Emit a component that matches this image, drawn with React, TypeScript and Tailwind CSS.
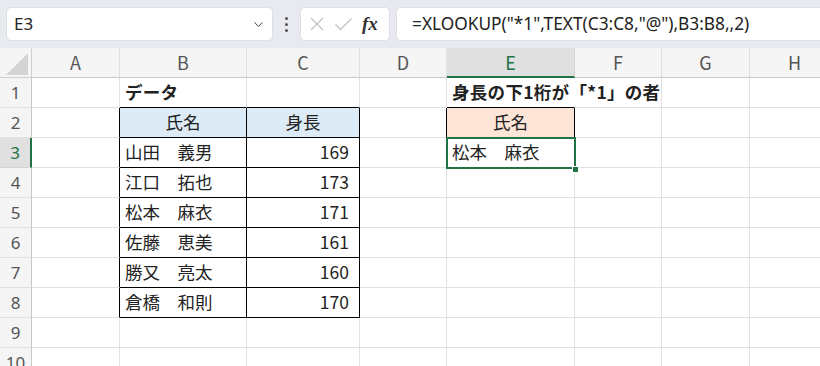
import { ChevronDown } from "lucide-react";

type Side = "black" | "grid" | "none";

const cols = [
	{ key: "A", w: "w-[88px]" },
	{ key: "B", w: "w-[127px]" },
	{ key: "C", w: "w-[113px]" },
	{ key: "D", w: "w-[87px]" },
	{ key: "E", w: "w-[128px]" },
	{ key: "F", w: "w-[87px]" },
	{ key: "G", w: "w-[88px]" },
	{ key: "H", w: "w-[90px]" },
];

const people = [
	["山田　義男", "169"],
	["江口　拓也", "173"],
	["松本　麻衣", "171"],
	["佐藤　恵美", "161"],
	["勝又　亮太", "160"],
	["倉橋　和則", "170"],
];

const rightCls: Record<Side, string> = {
	black: "border-r-black",
	grid: "border-r-[#e1e1e1]",
	none: "border-r-transparent",
};
const bottomCls: Record<Side, string> = {
	black: "border-b-black",
	grid: "border-b-[#e1e1e1]",
	none: "border-b-transparent",
};

const inTable = (r: number, c: string) => r >= 2 && r <= 8 && (c === "B" || c === "C");

function borders(r: number, c: string): [Side, Side] {
	let right: Side = "grid";
	let bottom: Side = "grid";
	if (inTable(r, c)) {
		right = "black";
		bottom = "black";
	}
	if (r === 1 && (c === "B" || c === "C")) bottom = "black";
	if (c === "A" && r >= 2 && r <= 8) right = "black";
	if (r === 1 && c === "E") {
		bottom = "black";
		right = "none";
	}
	if (r === 2 && c === "E") {
		right = "black";
		bottom = "black";
	}
	if (r === 2 && c === "D") right = "black";
	return [right, bottom];
}

type CellContent = { text: string; align?: "left" | "right" | "center"; bold?: boolean; fill?: string };

function content(r: number, c: string): CellContent | null {
	if (r === 1 && c === "B") return { text: "データ", bold: true };
	if (r === 1 && c === "E") return { text: "身長の下1桁が「*1」の者", bold: true };
	if (r === 2 && c === "B") return { text: "氏名", align: "center", fill: "bg-[#ddebf7]" };
	if (r === 2 && c === "C") return { text: "身長", align: "center", fill: "bg-[#ddebf7]" };
	if (r === 2 && c === "E") return { text: "氏名", align: "center", fill: "bg-[#fce4d6]" };
	if (r >= 3 && r <= 8 && c === "B") return { text: people[r - 3][0] };
	if (r >= 3 && r <= 8 && c === "C") return { text: people[r - 3][1], align: "right" };
	if (r === 3 && c === "E") return { text: "松本　麻衣" };
	return null;
}

const Cell = ({ r, c, w }: { r: number; c: string; w: string }) => {
	const [right, bottom] = borders(r, c);
	const ct = content(r, c);
	const align =
		ct?.align === "center" ? "justify-center" : ct?.align === "right" ? "justify-end pr-[10px]" : "justify-start pl-[5px]";
	return (
		<div
			className={`${w} shrink-0 h-[30px] border-r border-b ${rightCls[right]} ${bottomCls[bottom]} ${ct?.fill ?? ""} flex items-center ${align} whitespace-nowrap overflow-visible`}
		>
			{ct && (
				<span className={`${ct.bold ? "font-bold tracking-[0.3px]" : "font-normal"} relative z-10`}>{ct.text}</span>
			)}
		</div>
	);
};

const Toolbar = () => (
	<div className="h-[48px] bg-[#e8eaef] flex items-center pl-[6px] shrink-0">
		<div className="w-[267px] shrink-0 h-[34px] bg-white rounded-[5px] border border-[#dcdfe4] flex items-center justify-between pl-[7px] pr-[6px]">
			<span className="text-[17px] text-[#222] font-['Noto_Sans',sans-serif]">E3</span>
			<ChevronDown size={15} strokeWidth={1.6} className="text-[#444]" />
		</div>
		<div className="w-[27px] shrink-0 flex flex-col items-center gap-[3px]">
			<span className="w-[3px] h-[3px] bg-[#555] rounded-full" />
			<span className="w-[3px] h-[3px] bg-[#555] rounded-full" />
			<span className="w-[3px] h-[3px] bg-[#555] rounded-full" />
		</div>
		<div className="w-[90px] shrink-0 h-[34px] bg-white rounded-[5px] border border-[#dcdfe4] flex items-center px-[7px] gap-[9px]">
			<svg width="16" height="16" viewBox="0 0 16 16" className="ml-[1px]">
				<path d="M2 2 L14 14 M14 2 L2 14" stroke="#c2c2c2" strokeWidth="1.3" fill="none" />
			</svg>
			<svg width="19" height="16" viewBox="0 0 19 16">
				<path d="M1.5 8.5 L6.5 13.5 L17.5 2.5" stroke="#c2c2c2" strokeWidth="1.3" fill="none" />
			</svg>
			<span className="text-[19px] italic font-bold text-[#333] font-['Liberation_Serif',serif] leading-none -mt-[2px]">
				fx
			</span>
		</div>
		<div className="ml-[6px] w-[440px] shrink-0 h-[34px] bg-white rounded-[5px] border border-[#dcdfe4] flex items-center pl-[15px]">
			<span className="text-[17.3px] text-[#222] font-['Noto_Sans',sans-serif] whitespace-nowrap">
				=XLOOKUP("*1",TEXT(C3:C8,"@"),B3:B8,,2)
			</span>
		</div>
	</div>
);

const ColumnHeader = () => (
	<div className="flex h-[30px] shrink-0 bg-[#f5f5f5]">
		<div className="w-[32px] shrink-0 border-r border-b border-[#cfcfcf] flex items-end justify-end pr-[3px] pb-[2px]">
			<svg width="22" height="22" viewBox="0 0 22 22">
				<path d="M22 0 L22 22 L0 22 Z" fill="#d4d4d4" />
			</svg>
		</div>
		{cols.map((col) =>
			col.key === "E" ? (
				<div
					key={col.key}
					className={`${col.w} shrink-0 bg-[#e0e0e0] border-r border-r-[#d4d4d4] border-b-[2px] border-b-[#217346] flex items-center justify-center text-[18px] text-[#217346]`}
				>
					{col.key}
				</div>
			) : (
				<div
					key={col.key}
					className={`${col.w} shrink-0 border-r border-r-[#e0e0e0] border-b border-b-[#c8c8c8] flex items-center justify-center text-[18px] text-[#555]`}
				>
					{col.key}
				</div>
			),
		)}
	</div>
);

export default function App() {
	const rows = [1, 2, 3, 4, 5, 6, 7, 8, 9, 10];
	return (
		<div className="w-[820px] h-[366px] overflow-hidden bg-white flex flex-col font-['Noto_Sans_CJK_JP',sans-serif] text-[17.5px] text-[#222]">
			<Toolbar />
			<ColumnHeader />
			<div className="relative flex flex-col">
				{rows.map((r) => (
					<div key={r} className="flex h-[30px] shrink-0">
						{r === 3 ? (
							<div className="w-[32px] shrink-0 h-[30px] bg-[#e0e0e0] border-r-[2px] border-r-[#217346] border-b border-b-[#d4d4d4] flex items-center justify-center text-[17px] text-[#217346] font-['Noto_Sans',sans-serif]">
								{r}
							</div>
						) : (
							<div className="w-[32px] shrink-0 h-[30px] bg-[#f5f5f5] border-r border-r-[#c8c8c8] border-b border-b-[#e0e0e0] flex items-center justify-center text-[17px] text-[#555] font-['Noto_Sans',sans-serif]">
								{r}
							</div>
						)}
						{cols.map((col) => (
							<Cell key={col.key} r={r} c={col.key} w={col.w} />
						))}
					</div>
				))}
				<div className="absolute left-[446px] top-[59px] w-[130px] h-[32px] border-2 border-[#217346] pointer-events-none">
					<div className="absolute left-[124px] top-[27px] w-[7px] h-[7px] bg-[#217346] border border-white" />
				</div>
			</div>
		</div>
	);
}
